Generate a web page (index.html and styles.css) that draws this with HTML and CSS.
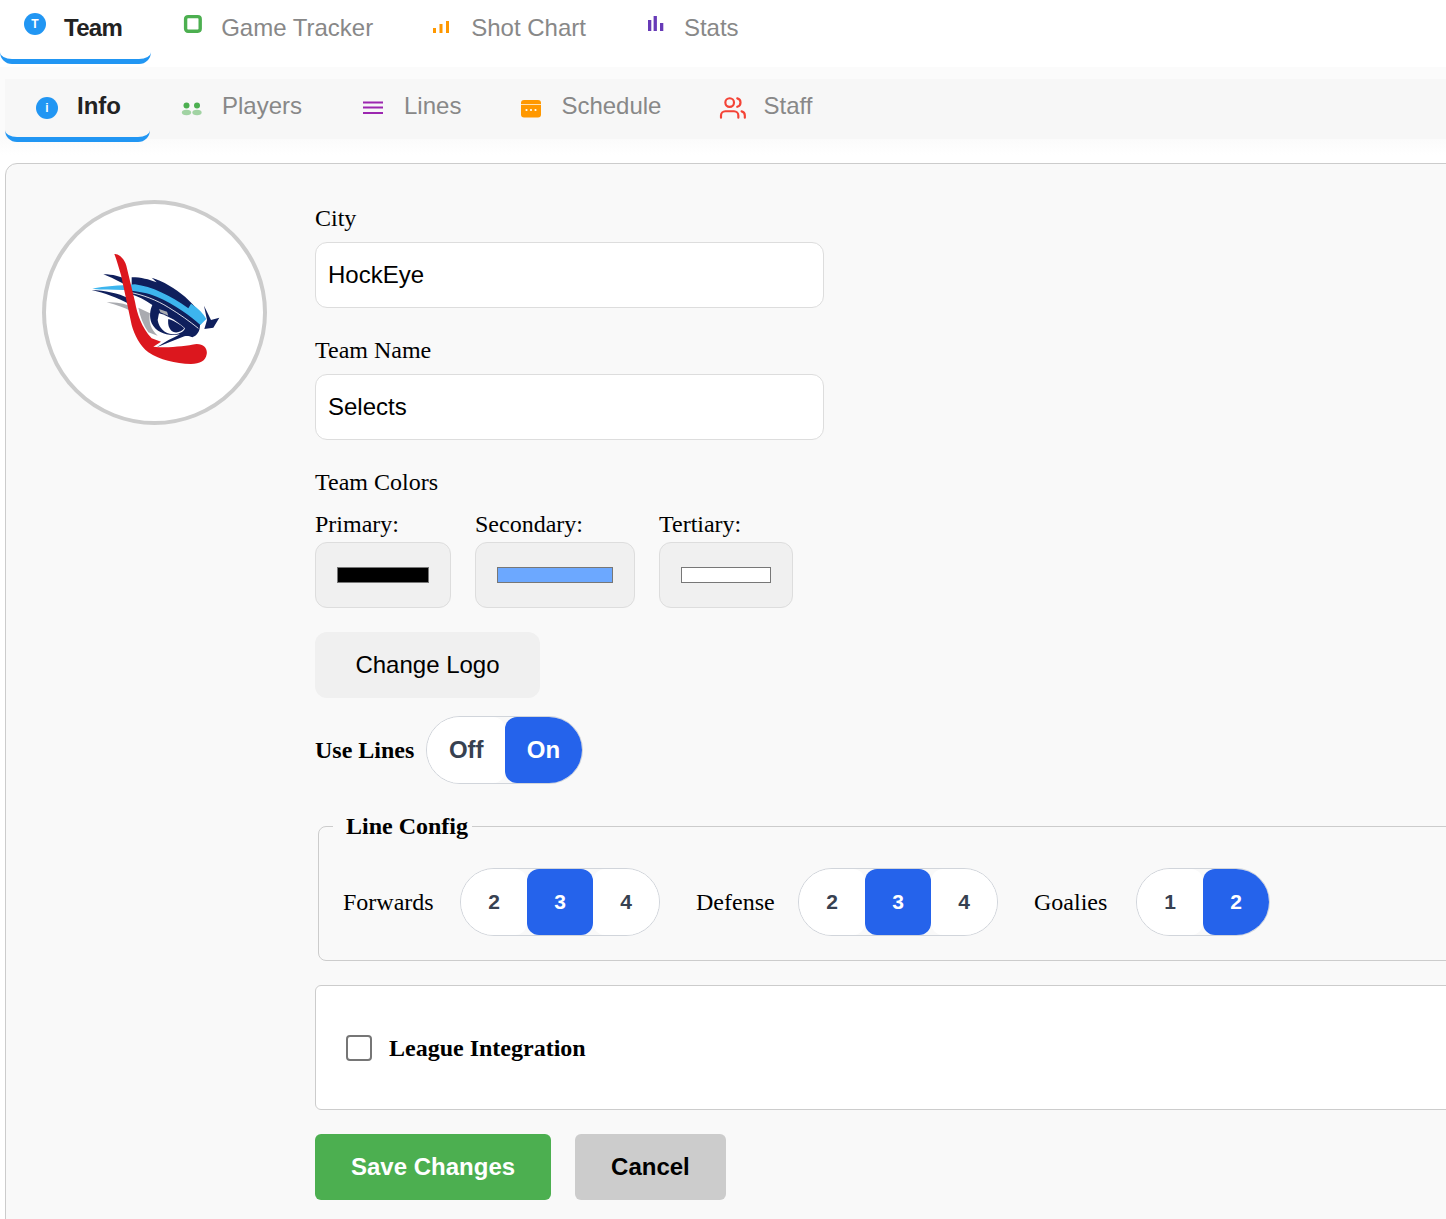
FILE: index.html
```html
<!DOCTYPE html>
<html lang="en">
<head>
<meta charset="utf-8">
<title>Team Info</title>
<link rel="stylesheet" href="styles.css">
</head>
<body>
<div class="app">
  <nav class="tabs">
    <a class="tab tab-first is-active"><span class="badge">T</span><span class="tab-text">Team</span></a>
    <a class="tab"><svg class="icon" viewBox="0 0 24 24"><rect x="4.6" y="4.6" width="14.6" height="14.6" rx="2.4" fill="#fff" stroke="#4caf50" stroke-width="3.4"/></svg><span class="tab-text">Game Tracker</span></a>
    <a class="tab"><svg class="icon icon-bars" viewBox="0 0 22 24" fill="#ff9800"><rect x="0" y="16" width="3" height="5"/><rect x="6.5" y="12" width="3" height="9"/><rect x="13" y="9" width="3" height="12"/></svg><span class="tab-text">Shot Chart</span></a>
    <a class="tab"><svg class="icon icon-bars" viewBox="0 0 22 24" fill="#673ab7"><rect x="2" y="8" width="3.3" height="11"/><rect x="7.6" y="4" width="3.3" height="15"/><rect x="14" y="11" width="3.3" height="8"/></svg><span class="tab-text">Stats</span></a>
  </nav>
  <div class="subnav">
    <nav class="subtabs">
      <a class="tab sub sub-first is-active"><span class="badge badge-sub">i</span><span class="tab-text">Info</span></a>
      <a class="tab sub"><svg class="icon-sub" viewBox="0 0 26 24" fill="#4caf50"><circle cx="6.5" cy="10.5" r="3"/><circle cx="17" cy="10.5" r="3"/><ellipse cx="6.5" cy="17.5" rx="4.6" ry="2.7" opacity=".5"/><ellipse cx="17" cy="17.5" rx="4.6" ry="2.7" opacity=".5"/></svg><span class="tab-text">Players</span></a>
      <a class="tab sub"><svg class="icon-sub" viewBox="0 0 26 24" fill="#9c27b0"><rect x="1" y="6.5" width="20" height="2"/><rect x="1" y="11.5" width="20" height="2"/><rect x="1" y="17" width="20" height="2"/></svg><span class="tab-text">Lines</span></a>
      <a class="tab sub"><svg class="icon-sub icon-schedule" viewBox="0 0 24 24"><rect x="0" y="5" width="20" height="17.5" rx="3" fill="#ff9800"/><rect x="0" y="9" width="20" height="1" fill="#ffe0b2"/><circle cx="5.5" cy="15" r="1.1" fill="#fff"/><circle cx="10" cy="15" r="1.1" fill="#fff"/><circle cx="14.5" cy="15" r="1.1" fill="#fff"/></svg><span class="tab-text">Schedule</span></a>
      <a class="tab sub"><svg class="icon-sub icon-staff" viewBox="1 0 24 24" fill="none" stroke="#f44336" stroke-width="2" stroke-linecap="round" stroke-linejoin="round"><path d="M17 21v-2a4 4 0 0 0-4-4H5a4 4 0 0 0-4 4v2"/><circle cx="9" cy="7" r="4"/><path d="M23 21v-2a4 4 0 0 0-3-3.87"/><path d="M16 3.13a4 4 0 0 1 0 7.75"/></svg><span class="tab-text">Staff</span></a>
    </nav>
  </div>
  <main class="panel">
    <div class="logo">
      <svg class="logo-art" viewBox="0 0 420 375">
        <path fill="#a9abb0" d="M65 172C95 172 120 176 135 184L140 200C120 188 95 180 65 172Z"/>
        <path fill="#a9abb0" d="M160 188L195 205C190 230 198 255 218 272L190 262C175 240 165 215 160 188Z"/>
        <path fill="#0f1f5c" d="M55 88C85 88 105 95 122 102L128 124C100 108 80 98 55 88Z"/>
        <path fill="#0f1f5c" d="M20 135C60 137 100 144 130 160L134 178C95 157 60 144 20 135Z"/>
        <path fill="#0f1f5c" d="M140 97C170 97 190 103 215 112L200 98C235 108 270 130 300 155C325 178 345 200 358 222L345 240C345 260 335 272 322 277C312 272 305 272 298 274L215 307C240 290 262 280 285 268C250 275 215 265 200 235C192 215 195 195 202 180C180 165 160 155 140 148Z"/>
        <path fill="#0f1f5c" d="M357 182L378 225L403 218L385 248L358 252L366 225Z"/>
        <path fill="#fff" d="M222 205C250 212 280 232 300 250C295 262 280 268 262 268C240 266 222 250 218 225Z"/>
        <path fill="#0f1f5c" d="M250 222C270 228 288 240 298 250C290 262 270 266 260 258C250 248 248 235 250 222Z"/>
        <path fill="#a9abb0" d="M222 192L246 200L250 212L226 202Z"/>
        <path fill="none" stroke="#fff" stroke-width="2.5" d="M135 142C175 150 215 165 250 187C285 208 315 230 340 250"/>
        <path fill="#3db5ee" d="M22 131C60 124 100 122 150 118C200 125 255 150 310 190L318 176C340 190 355 205 364 222L346 240C320 215 270 178 215 155C190 145 160 138 115 135C80 133 50 135 22 131Z"/>
        <path fill="#dc171e" d="M88 27C100 25 118 40 124 62L150 170C156 205 170 248 200 280L228 290L205 305C250 310 300 303 335 297C358 297 368 312 365 328C362 348 345 357 318 357C270 356 225 345 190 322C165 303 148 270 140 240L108 90C102 70 95 45 88 27Z"/>
      </svg>
    </div>
    <form class="form">
      <div class="field">
        <label class="label">City</label>
        <input class="text-input" type="text" value="HockEye">
      </div>
      <div class="field">
        <label class="label">Team Name</label>
        <input class="text-input" type="text" value="Selects">
      </div>
      <div class="field">
        <div class="label label-group">Team Colors</div>
        <div class="colors">
          <div class="color">
            <label class="color-label">Primary:</label>
            <input class="color-input w-primary" type="color" value="#000000">
          </div>
          <div class="color">
            <label class="color-label">Secondary:</label>
            <input class="color-input w-secondary" type="color" value="#6ca8ff">
          </div>
          <div class="color">
            <label class="color-label">Tertiary:</label>
            <input class="color-input w-tertiary" type="color" value="#ffffff">
          </div>
        </div>
      </div>
      <div class="logo-row"><button class="btn-logo" type="button">Change Logo</button></div>
      <div class="lines-row">
        <span class="lines-label">Use Lines</span>
        <div class="seg">
          <button class="seg-btn seg-word" type="button">Off</button>
          <button class="seg-btn seg-word is-on" type="button">On</button>
        </div>
      </div>
      <fieldset class="config">
        <legend class="config-legend">Line Config</legend>
        <div class="config-row">
          <div class="config-item">
            <span class="cfg-label cfg-forwards">Forwards</span>
            <div class="seg">
              <button class="seg-btn seg-num" type="button">2</button>
              <button class="seg-btn seg-num is-on" type="button">3</button>
              <button class="seg-btn seg-num" type="button">4</button>
            </div>
          </div>
          <div class="config-item">
            <span class="cfg-label cfg-defense">Defense</span>
            <div class="seg">
              <button class="seg-btn seg-num" type="button">2</button>
              <button class="seg-btn seg-num is-on" type="button">3</button>
              <button class="seg-btn seg-num" type="button">4</button>
            </div>
          </div>
          <div class="config-item">
            <span class="cfg-label cfg-goalies">Goalies</span>
            <div class="seg">
              <button class="seg-btn seg-num" type="button">1</button>
              <button class="seg-btn seg-num is-on" type="button">2</button>
            </div>
          </div>
        </div>
      </fieldset>
      <div class="league">
        <input class="check" type="checkbox" id="league">
        <label class="league-label" for="league">League Integration</label>
      </div>
      <div class="actions">
        <button class="btn btn-save" type="button">Save Changes</button>
        <button class="btn btn-cancel" type="button">Cancel</button>
      </div>
    </form>
  </main>
</div>
</body>
</html>
```
FILE: styles.css
```css
html, body {
  margin: 0;
  padding: 0;
  height: 100%;
  overflow: hidden;
  background: #fff;
}
.app {
  width: 1700px;
  font-family: "Liberation Serif", "Times New Roman", serif;
  font-size: 24px;
  line-height: 28px;
  color: #000;
}
.tabs {
  display: flex;
  height: 64px;
  font-family: "Liberation Sans", Arial, sans-serif;
}
.tab {
  box-sizing: border-box;
  display: flex;
  align-items: center;
  gap: 16px;
  height: 64px;
  padding: 0 30px 3px;
  color: #888;
  border-bottom: 5px solid transparent;
  border-radius: 0 0 12px 12px;
}
.tab-first {
  padding-left: 24px;
  padding-right: 29px;
}
.tab-first .tab-text { letter-spacing: -0.7px; }
.tab.is-active {
  color: #222;
  font-weight: 700;
  border-bottom-color: #2196f3;
}
.badge {
  flex: none;
  width: 22px;
  height: 22px;
  margin: -8px 2px 0 0;
  border-radius: 50%;
  background: #2196f3;
  color: #fff;
  font-size: 12px;
  line-height: 22px;
  font-weight: 700;
  text-align: center;
}
.icon {
  flex: none;
  width: 24px;
  height: 24px;
  margin-top: -8px;
}
.icon-bars { width: 22px; }
.subnav {
  margin-top: 3px;
  padding: 12px 0 24px 5px;
  background: linear-gradient(#fbfbfb 0, #fbfbfb 72px, #fff 88px);
}
.subtabs {
  display: flex;
  height: 60px;
  background: #f7f7f7;
  font-family: "Liberation Sans", Arial, sans-serif;
}
.tab.sub {
  height: 63px;
  padding: 0 30px 4px;
}
.tab.sub-first { padding-right: 29px; }
.badge-sub {
  margin: 4px 3px 0 1px;
}
.icon-sub {
  flex: none;
  width: 26px;
  height: 24px;
  margin-top: 2px;
  overflow: visible;
}
.icon-schedule { width: 24px; }
.icon-staff {
  height: 26px;
  margin-top: 4px;
}
.panel {
  display: flex;
  gap: 48px;
  margin-left: 5px;
  padding: 36px;
  background: #f9f9f9;
  border: 1px solid #ccc;
  border-radius: 12px;
}
.logo {
  box-sizing: border-box;
  flex: none;
  display: flex;
  align-items: center;
  justify-content: center;
  width: 225px;
  height: 225px;
  border: 4px solid #ccc;
  border-radius: 50%;
  background: #fff;
}
.logo-art {
  width: 140px;
  height: 125px;
  margin-bottom: 10px;
}
.form {
  flex: 1;
  min-width: 0;
}
.field { margin-bottom: 24px; }
.label {
  display: block;
  padding: 4px 0 10px;
}
.label-group { padding-bottom: 14px; }
.text-input {
  box-sizing: border-box;
  display: block;
  width: 509px;
  height: 66px;
  padding: 0 12px;
  border: 1px solid #ddd;
  border-radius: 12px;
  background: #fff;
  font: 24px "Liberation Sans", Arial, sans-serif;
  color: #000;
}
.colors {
  display: flex;
  gap: 24px;
}
.color-label {
  display: block;
  margin-bottom: 4px;
}
.color-input {
  box-sizing: border-box;
  display: block;
  height: 66px;
  padding: 24px 21px;
  border: 1px solid #ddd;
  border-radius: 12px;
  background: #f0f0f0;
  cursor: pointer;
}
.color-input::-webkit-color-swatch-wrapper { padding: 0; }
.color-input::-webkit-color-swatch {
  border: 1px solid #777;
  border-radius: 0;
}
.w-primary { width: 136px; }
.w-secondary { width: 160px; }
.w-tertiary { width: 134px; }
.logo-row { margin-bottom: 18px; }
.btn-logo {
  width: 225px;
  height: 66px;
  border: 0;
  border-radius: 12px;
  background: #f0f0f0;
  color: #000;
  font: 24px "Liberation Sans", Arial, sans-serif;
}
.lines-row {
  display: flex;
  align-items: center;
  gap: 12px;
  margin-bottom: 28px;
}
.lines-label { font-weight: 700; }
.seg {
  display: inline-flex;
  border: 1px solid #d1d5db;
  border-radius: 34px;
}
.seg-btn {
  height: 66px;
  padding: 0;
  border: 0;
  border-radius: 12px;
  background: #fff;
  color: #374151;
  font-family: "Liberation Sans", Arial, sans-serif;
  font-weight: 700;
}
.seg-btn:first-child { border-radius: 33px 12px 12px 33px; }
.seg-btn:last-child { border-radius: 12px 33px 33px 12px; }
.seg-btn.is-on {
  background: #2563eb;
  color: #fff;
}
.seg-word {
  padding: 0 21.6px;
  font-size: 24px;
}
.seg-num {
  width: 66px;
  font-size: 21px;
}
.config {
  margin: 0 0 24px 3px;
  padding: 28px 24px 24px;
  border: 1px solid #ccc;
  border-radius: 8px;
}
.config-legend {
  margin-left: -10px;
  padding: 0 4px 0 13px;
  font-weight: 700;
}
.config-row {
  display: flex;
  gap: 36px;
}
.config-item {
  display: flex;
  align-items: center;
  gap: 26px;
}
.cfg-label {
  flex: none;
  white-space: nowrap;
}
.cfg-forwards { width: 91px; }
.cfg-defense { width: 76px; }
.cfg-goalies { width: 76px; }
.league {
  display: flex;
  align-items: center;
  gap: 17px;
  margin-bottom: 24px;
  padding: 48px 30px 47px;
  border: 1px solid #ccc;
  border-radius: 6px;
  background: #fff;
}
.check {
  box-sizing: border-box;
  flex: none;
  width: 26px;
  height: 26px;
  margin: 0;
  appearance: none;
  border: 2px solid #767676;
  border-radius: 4px;
  background: #fff;
}
.league-label { font-weight: 700; }
.actions {
  display: flex;
  gap: 24px;
}
.btn {
  height: 66px;
  padding: 0 36px;
  border: 0;
  border-radius: 6px;
  font: 700 24px "Liberation Sans", Arial, sans-serif;
}
.btn-save {
  background: #4caf50;
  color: #fff;
}
.btn-cancel {
  background: #ccc;
  color: #000;
}
```
